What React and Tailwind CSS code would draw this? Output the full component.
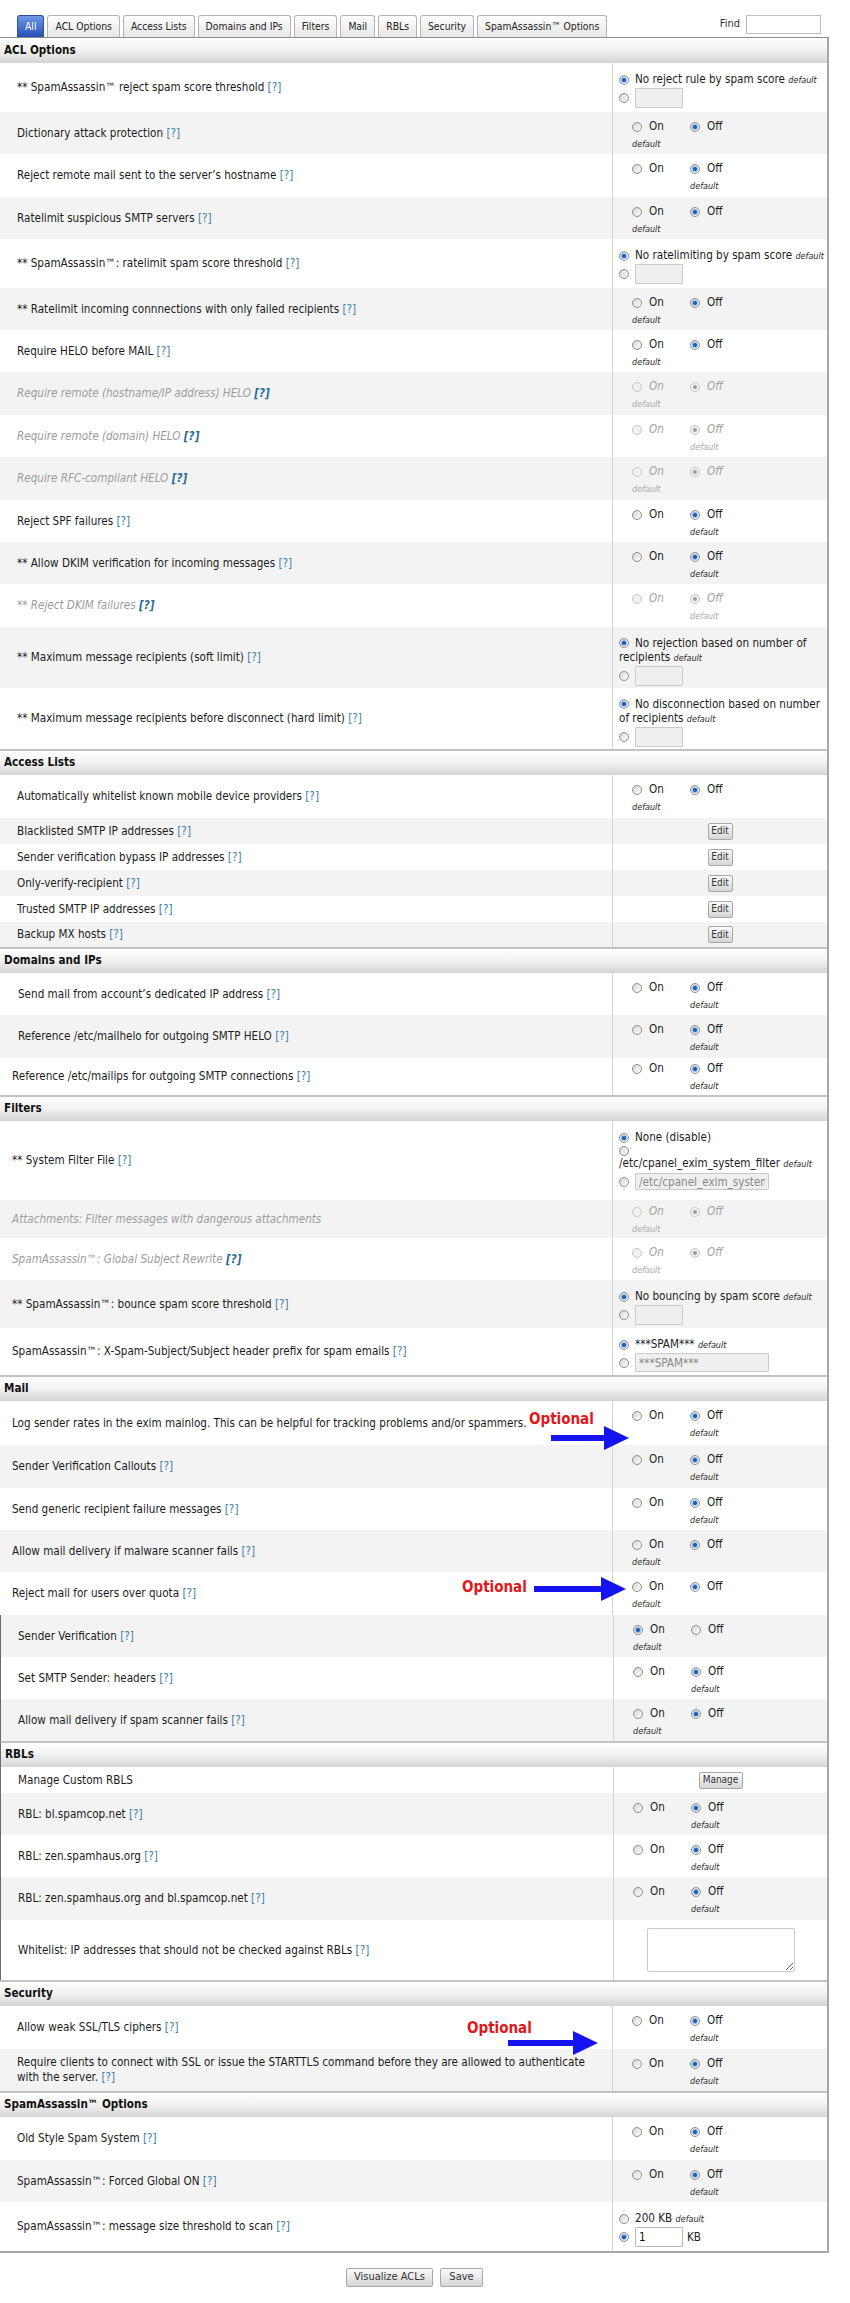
import React from "react";

const Q = ({ dis }) => (
  <span className={dis ? "text-[#2c6c96] font-bold" : "text-[#3b7fa8]"}>[?]</span>
);

const Def = ({ dis }) => (
  <i className={`text-[9px] ${dis ? "text-[#a8a8a8]" : "text-[#2a2a2a]"}`}>default</i>
);

function Radio({ on, dis }) {
  return (
    <span
      className={`inline-flex items-center justify-center w-[10px] h-[10px] rounded-full border shrink-0 ${
        dis
          ? "border-[#c6c6c6] bg-[#f1f1f1]"
          : "border-[#8e8e8e] bg-gradient-to-br from-[#d4d4d4] to-white"
      }`}
    >
      {on && (
        <span
          className={`w-[4px] h-[4px] rounded-full ${
            dis ? "bg-[#9c9c9c]" : "bg-[#1a5ab3] shadow-[0_0_0_1px_#93bdec]"
          }`}
        />
      )}
    </span>
  );
}

function OnOff({ def, sel = "off", dis, pt = "pt-[8px]" }) {
  const lbl = dis ? "italic text-[#a2a2a2]" : "";
  const d = (
    <div className="leading-[10px] mt-[4px]">
      <Def dis={dis} />
    </div>
  );
  return (
    <div className={`flex pl-[19px] ${pt}`}>
      <div className="w-[58px]">
        <div className="flex items-center gap-[7px] h-[14px]">
          <Radio on={sel === "on"} dis={dis} />
          <span className={lbl}>On</span>
        </div>
        {def === "on" && d}
      </div>
      <div>
        <div className="flex items-center gap-[7px] h-[14px]">
          <Radio on={sel === "off"} dis={dis} />
          <span className={lbl}>Off</span>
        </div>
        {def === "off" && d}
      </div>
    </div>
  );
}

const Box = ({ w = "w-[48px]", h = "h-[20px]", value = "", white }) => (
  <input
    readOnly
    value={value}
    className={`${w} ${h} border rounded-[1px] px-[3px] text-[11.6px] outline-none ${
      white
        ? "border-[#b9b9b9] bg-white text-[#111]"
        : "border-[#cacaca] bg-[#efefef] text-[#8a8a8a]"
    }`}
  />
);

function Score({ lines }) {
  return (
    <div className="pl-[6px] pt-[9px] leading-[14px] whitespace-nowrap">
      {lines.map((l, i) => (
        <div key={i} className="flex items-center gap-[6px]">
          {i === 0 && <Radio on />}
          <span>
            {l}
            {i === lines.length - 1 && (
              <>
                {" "}
                <Def />
              </>
            )}
          </span>
        </div>
      ))}
      <div className="flex items-center gap-[6px] mt-[1px]">
        <Radio />
        <Box />
      </div>
    </div>
  );
}

const Btn = ({ children, w }) => (
  <button
    className={`${w} h-[17px] text-[10px] leading-none text-[#333] border border-[#a8a8a8] rounded-[2px] bg-gradient-to-b from-[#fbfbfb] to-[#d6d6d6]`}
  >
    {children}
  </button>
);

const Centered = ({ children }) => (
  <div className="h-full flex items-center justify-center">{children}</div>
);

function Arrow({ w, className }) {
  return (
    <svg width={w} height="24" viewBox={`0 0 ${w} 24`} className={className}>
      <polygon
        points={`0,9 ${w - 25},9 ${w - 25},0 ${w},12 ${w - 25},24 ${w - 25},15 0,15`}
        fill="#1414f0"
      />
    </svg>
  );
}

const Optional = ({ className }) => (
  <span
    className={`absolute z-10 text-[15px] font-bold leading-none text-[#e2161b] ${className}`}
  >
    Optional
  </span>
);

const sections = [
  {
    title: "ACL Options",
    rows: [
      { t: "** SpamAssassin™ reject spam score threshold", h: "h-[49px]", right: <Score lines={["No reject rule by spam score"]} /> },
      { t: "Dictionary attack protection", h: "h-[42px]", right: <OnOff def="on" /> },
      { t: "Reject remote mail sent to the server’s hostname", h: "h-[43px]", right: <OnOff def="off" /> },
      { t: "Ratelimit suspicious SMTP servers", h: "h-[42px]", right: <OnOff def="on" /> },
      { t: "** SpamAssassin™: ratelimit spam score threshold", h: "h-[49px]", right: <Score lines={["No ratelimiting by spam score"]} /> },
      { t: "** Ratelimit incoming connnections with only failed recipients", h: "h-[42px]", right: <OnOff def="on" /> },
      { t: "Require HELO before MAIL", h: "h-[42px]", right: <OnOff def="on" /> },
      { t: "Require remote (hostname/IP address) HELO", dis: true, h: "h-[43px]", right: <OnOff def="on" dis /> },
      { t: "Require remote (domain) HELO", dis: true, h: "h-[42px]", right: <OnOff def="off" dis /> },
      { t: "Require RFC-compliant HELO", dis: true, h: "h-[43px]", right: <OnOff def="on" dis /> },
      { t: "Reject SPF failures", h: "h-[42px]", right: <OnOff def="off" /> },
      { t: "** Allow DKIM verification for incoming messages", h: "h-[42px]", right: <OnOff def="off" /> },
      { t: "** Reject DKIM failures", dis: true, h: "h-[43px]", right: <OnOff def="off" dis /> },
      { t: "** Maximum message recipients (soft limit)", h: "h-[61px]", right: <Score lines={["No rejection based on number of", "recipients"]} /> },
      { t: "** Maximum message recipients before disconnect (hard limit)", h: "h-[61px]", right: <Score lines={["No disconnection based on number", "of recipients"]} /> },
    ],
  },
  {
    title: "Access Lists",
    rows: [
      { t: "Automatically whitelist known mobile device providers", h: "h-[43px]", right: <OnOff def="on" /> },
      { t: "Blacklisted SMTP IP addresses", h: "h-[26px]", right: <Centered><Btn w="w-[25px]">Edit</Btn></Centered> },
      { t: "Sender verification bypass IP addresses", h: "h-[26px]", right: <Centered><Btn w="w-[25px]">Edit</Btn></Centered> },
      { t: "Only-verify-recipient", h: "h-[26px]", right: <Centered><Btn w="w-[25px]">Edit</Btn></Centered> },
      { t: "Trusted SMTP IP addresses", h: "h-[26px]", right: <Centered><Btn w="w-[25px]">Edit</Btn></Centered> },
      { t: "Backup MX hosts", h: "h-[25px]", right: <Centered><Btn w="w-[25px]">Edit</Btn></Centered> },
    ],
  },
  {
    title: "Domains and IPs",
    rows: [
      { t: "Send mail from account’s dedicated IP address", h: "h-[42px]", ind: "pl-[18px]", right: <OnOff def="off" /> },
      { t: "Reference /etc/mailhelo for outgoing SMTP HELO", h: "h-[43px]", ind: "pl-[18px]", right: <OnOff def="off" /> },
      { t: "Reference /etc/mailips for outgoing SMTP connections", h: "h-[37px]", ind: "pl-[12px]", right: <OnOff def="off" pt="pt-[4px]" /> },
    ],
  },
  {
    title: "Filters",
    rows: [
      {
        t: "** System Filter File",
        h: "h-[79px]",
        ind: "pl-[12px]",
        right: (
          <div className="pl-[6px] pt-[10px] leading-[13px] whitespace-nowrap">
            <div className="flex items-center gap-[6px]">
              <Radio on />
              <span>None (disable)</span>
            </div>
            <div className="flex items-center h-[13px]">
              <Radio />
            </div>
            <div>
              /etc/cpanel_exim_system_filter <Def />
            </div>
            <div className="flex items-center gap-[6px] mt-[2px]">
              <Radio />
              <Box w="w-[134px]" h="h-[17px]" value="/etc/cpanel_exim_system_filter" />
            </div>
          </div>
        ),
      },
      { t: "Attachments: Filter messages with dangerous attachments", q: false, dis: true, h: "h-[38px]", ind: "pl-[12px]", right: <OnOff def="on" dis pt="pt-[5px]" /> },
      { t: "SpamAssassin™: Global Subject Rewrite", dis: true, h: "h-[42px]", ind: "pl-[12px]", right: <OnOff def="on" dis /> },
      { t: "** SpamAssassin™: bounce spam score threshold", h: "h-[48px]", ind: "pl-[12px]", right: <Score lines={["No bouncing by spam score"]} /> },
      {
        t: "SpamAssassin™: X-Spam-Subject/Subject header prefix for spam emails",
        h: "h-[47px]",
        ind: "pl-[12px]",
        right: (
          <div className="pl-[6px] pt-[9px] leading-[14px] whitespace-nowrap">
            <div className="flex items-center gap-[6px]">
              <Radio on />
              <span>
                ***SPAM*** <Def />
              </span>
            </div>
            <div className="flex items-center gap-[6px] mt-[1px]">
              <Radio />
              <Box w="w-[134px]" h="h-[19px]" value="***SPAM***" />
            </div>
          </div>
        ),
      },
    ],
  },
  {
    title: "Mail",
    rows: [
      {
        t: "Log sender rates in the exim mainlog. This can be helpful for tracking problems and/or spammers.",
        q: false,
        h: "h-[44px]",
        ind: "pl-[12px]",
        right: <OnOff def="off" />,
        extra: (
          <>
            <Optional className="left-[529px] top-[11px]" />
            <Arrow w={78} className="absolute left-[551px] top-[25px] z-10" />
          </>
        ),
      },
      { t: "Sender Verification Callouts", h: "h-[43px]", ind: "pl-[12px]", right: <OnOff def="off" /> },
      { t: "Send generic recipient failure messages", h: "h-[42px]", ind: "pl-[12px]", right: <OnOff def="off" /> },
      { t: "Allow mail delivery if malware scanner fails", h: "h-[42px]", ind: "pl-[12px]", right: <OnOff def="on" /> },
      {
        t: "Reject mail for users over quota",
        h: "h-[43px]",
        ind: "pl-[12px]",
        right: <OnOff def="on" />,
        extra: (
          <>
            <Optional className="left-[462px] top-[8px]" />
            <Arrow w={92} className="absolute left-[534px] top-[5px] z-10" />
          </>
        ),
      },
      { t: "Sender Verification", h: "h-[42px]", lb: true, right: <OnOff def="on" sel="on" /> },
      { t: "Set SMTP Sender: headers", h: "h-[42px]", lb: true, right: <OnOff def="off" /> },
      { t: "Allow mail delivery if spam scanner fails", h: "h-[42px]", lb: true, right: <OnOff def="on" /> },
    ],
  },
  {
    title: "RBLs",
    lb: true,
    rows: [
      { t: "Manage Custom RBLS", q: false, h: "h-[26px]", lb: true, right: <Centered><Btn w="w-[44px]">Manage</Btn></Centered> },
      { t: "RBL: bl.spamcop.net", h: "h-[42px]", lb: true, right: <OnOff def="off" /> },
      { t: "RBL: zen.spamhaus.org", h: "h-[42px]", lb: true, right: <OnOff def="off" /> },
      { t: "RBL: zen.spamhaus.org and bl.spamcop.net", h: "h-[43px]", lb: true, right: <OnOff def="off" /> },
      {
        t: "Whitelist: IP addresses that should not be checked against RBLs",
        h: "h-[60px]",
        lb: true,
        right: (
          <div className="flex justify-center pt-[8px]">
            <textarea readOnly className="w-[148px] h-[44px] border border-[#cbcbcb] rounded-[2px] bg-white outline-none" />
          </div>
        ),
      },
    ],
  },
  {
    title: "Security",
    rows: [
      {
        t: "Allow weak SSL/TLS ciphers",
        h: "h-[43px]",
        right: <OnOff def="off" />,
        extra: (
          <>
            <Optional className="left-[467px] top-[15px]" />
            <Arrow w={90} className="absolute left-[508px] top-[25px] z-10" />
          </>
        ),
      },
      {
        t: (
          <>
            Require clients to connect with SSL or issue the STARTTLS command before they are allowed to authenticate
            <br />
            with the server.
          </>
        ),
        h: "h-[42px]",
        right: <OnOff def="off" />,
      },
    ],
  },
  {
    title: "SpamAssassin™ Options",
    rows: [
      { t: "Old Style Spam System", h: "h-[43px]", right: <OnOff def="off" /> },
      { t: "SpamAssassin™: Forced Global ON", h: "h-[42px]", right: <OnOff def="off" /> },
      {
        t: "SpamAssassin™: message size threshold to scan",
        h: "h-[49px]",
        right: (
          <div className="pl-[6px] pt-[9px] leading-[14px] whitespace-nowrap">
            <div className="flex items-center gap-[6px]">
              <Radio />
              <span>
                200 KB <Def />
              </span>
            </div>
            <div className="flex items-center gap-[6px] mt-[1px]">
              <Radio on />
              <Box white value="1" />
              <span className="-ml-[2px]">KB</span>
            </div>
          </div>
        ),
      },
    ],
  },
];

function Row({ r, gray }) {
  return (
    <div
      className={`relative flex ${r.h} ${gray ? "bg-[#f3f3f3]" : "bg-white"} ${
        r.lb ? "border-l border-[#6a6a6a]" : ""
      }`}
    >
      <div
        className={`w-[612px] shrink-0 flex items-center ${r.ind || "pl-[17px]"} ${
          r.dis ? "italic text-[#9c9c9c]" : "text-[#1c1c1c]"
        }`}
      >
        <span className="leading-[15px]">
          {r.t}
          {r.q !== false && (
            <>
              {" "}
              <Q dis={r.dis} />
            </>
          )}
        </span>
      </div>
      <div className="flex-1 border-l border-[#d3d3d3]">{r.right}</div>
      {r.extra}
    </div>
  );
}

function Section({ s, first }) {
  return (
    <div>
      <div
        className={`flex items-center pl-[4px] font-bold text-[#111] bg-gradient-to-b from-white via-[#f1f1f1] to-[#d4d4d4] ${
          first ? "h-[25px]" : "h-[26px] border-t-2 border-[#c3c3c3]"
        } ${s.lb ? "border-l border-l-[#6a6a6a]" : ""}`}
      >
        {s.title}
      </div>
      {s.rows.map((r, i) => (
        <Row key={i} r={r} gray={i % 2 === 1} />
      ))}
    </div>
  );
}

const tabs = ["All", "ACL Options", "Access Lists", "Domains and IPs", "Filters", "Mail", "RBLs", "Security", "SpamAssassin™ Options"];

export default function App() {
  return (
    <div className="w-[850px] h-[2303px] bg-white text-[11.6px] text-[#1c1c1c] font-['DejaVu_Sans_Condensed','DejaVu_Sans',sans-serif] font-stretch-condensed">
      <div className="w-[829px]">
        <div className="h-[38px] flex items-end justify-between border-b border-[#8d8d8d]">
          <div className="flex items-end gap-[3px] pl-[17px]">
            {tabs.map((t, i) => (
              <div
                key={t}
                className={`h-[22px] px-[7px] flex items-center text-[10.3px] rounded-t-[3px] border border-b-0 ${
                  i === 0
                    ? "bg-gradient-to-b from-[#6f98e4] to-[#2550b4] border-[#2a4d9c] text-white"
                    : "bg-gradient-to-b from-white to-[#e6e6e6] border-[#b3b3b3] text-[#222]"
                }`}
              >
                {t}
              </div>
            ))}
          </div>
          <div className="self-start flex items-center gap-[6px] pt-[15px] pr-[8px]">
            <span className="text-[11px] text-[#333]">Find</span>
            <input readOnly className="w-[75px] h-[19px] border border-[#bdbdbd] bg-white outline-none" />
          </div>
        </div>
        <div className="border-r-2 border-b-2 border-[#a7a7a7]">
          {sections.map((s, i) => (
            <Section key={s.title} s={s} first={i === 0} />
          ))}
        </div>
        <div className="flex justify-center gap-[7px] mt-[15px]">
          <button className="w-[87px] h-[19px] text-[11px] text-[#333] border border-[#a8a8a8] rounded-[2px] bg-gradient-to-b from-[#fbfbfb] to-[#d6d6d6]">
            Visualize ACLs
          </button>
          <button className="w-[43px] h-[19px] text-[11px] text-[#333] border border-[#a8a8a8] rounded-[2px] bg-gradient-to-b from-[#fbfbfb] to-[#d6d6d6]">
            Save
          </button>
        </div>
      </div>
    </div>
  );
}
